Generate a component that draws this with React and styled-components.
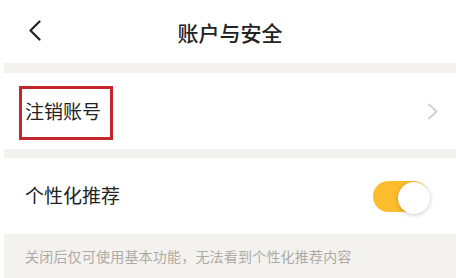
import styled, { createGlobalStyle } from "styled-components";

const GlobalStyle = createGlobalStyle`
  * { box-sizing: border-box; }
  body {
    margin: 0;
    background: #ffffff;
    font-family: "Noto Sans CJK SC", "Noto Sans", sans-serif;
  }
`;

const Page = styled.div`
  width: 456px;
  height: 278px;
  padding-left: 4px;
  background: #ffffff;
  overflow: hidden;
  display: flex;
  flex-direction: column;
`;

const Header = styled.div`
  height: 63px;
  display: flex;
  align-items: center;
  justify-content: center;
  position: relative;
  background: #ffffff;
`;

const BackButton = styled.div`
  position: absolute;
  left: 21px;
  top: 19px;
  width: 20px;
  height: 22px;
  display: flex;
  align-items: center;
  justify-content: center;
`;

const Title = styled.h1`
  margin: 1px 0 0;
  font-size: 21px;
  font-weight: 500;
  color: #222222;
`;

const Gap = styled.div`
  height: ${(p) => p.h}px;
  background: #f4f2ee;
`;

const Row = styled.div`
  height: 76px;
  display: flex;
  align-items: center;
  justify-content: space-between;
  padding: 0 17px 0 21px;
  background: #ffffff;
`;

const Label = styled.span`
  position: relative;
  font-size: 19px;
  line-height: 22px;
  color: #222222;
  margin-top: ${(p) => p.$offset || 0}px;

  ${(p) =>
    p.$marked &&
    `
    &::after {
      content: "";
      position: absolute;
      left: -6px;
      right: -12px;
      top: -14px;
      bottom: -18px;
      border: 3px solid #c1272d;
    }
  `}
`;

const Chevron = styled.svg`
  display: block;
`;

const Toggle = styled.div`
  position: relative;
  width: 56px;
  height: 31px;
  border-radius: 16px;
  background: #fbbd2c;
  margin-right: 10px;
`;

const Knob = styled.div`
  position: absolute;
  right: -1px;
  top: 1px;
  width: 32px;
  height: 32px;
  border-radius: 50%;
  background: #ffffff;
  box-shadow: 0 1px 4px rgba(0, 0, 0, 0.22);
`;

const Note = styled.div`
  flex: 1;
  background: #f4f2ee;
  padding: 13px 21px 0;
  font-size: 14px;
  letter-spacing: 0.2px;
  line-height: 18px;
  color: #aeaaa6;
`;

export default function App() {
  return (
    <>
      <GlobalStyle />
      <Page>
        <Header>
          <BackButton>
            <svg width="14" height="21" viewBox="0 0 14 21">
              <path d="M11.5 1.5 L2.5 10.5 L11.5 19.5" fill="none" stroke="#222" strokeWidth="2.2" strokeLinecap="round" strokeLinejoin="round" />
            </svg>
          </BackButton>
          <Title>账户与安全</Title>
        </Header>
        <Gap h={10} />
        <Row>
          <Label $marked>注销账号</Label>
          <Chevron width="12" height="17" viewBox="0 0 12 17">
            <path d="M2 1.5 L9.5 8.5 L2 15.5" fill="none" stroke="#cfcfcf" strokeWidth="1.8" strokeLinecap="round" strokeLinejoin="round" />
          </Chevron>
        </Row>
        <Gap h={9} />
        <Row>
          <Label $offset={-2}>个性化推荐</Label>
          <Toggle>
            <Knob />
          </Toggle>
        </Row>
        <Note>关闭后仅可使用基本功能，无法看到个性化推荐内容</Note>
      </Page>
    </>
  );
}
